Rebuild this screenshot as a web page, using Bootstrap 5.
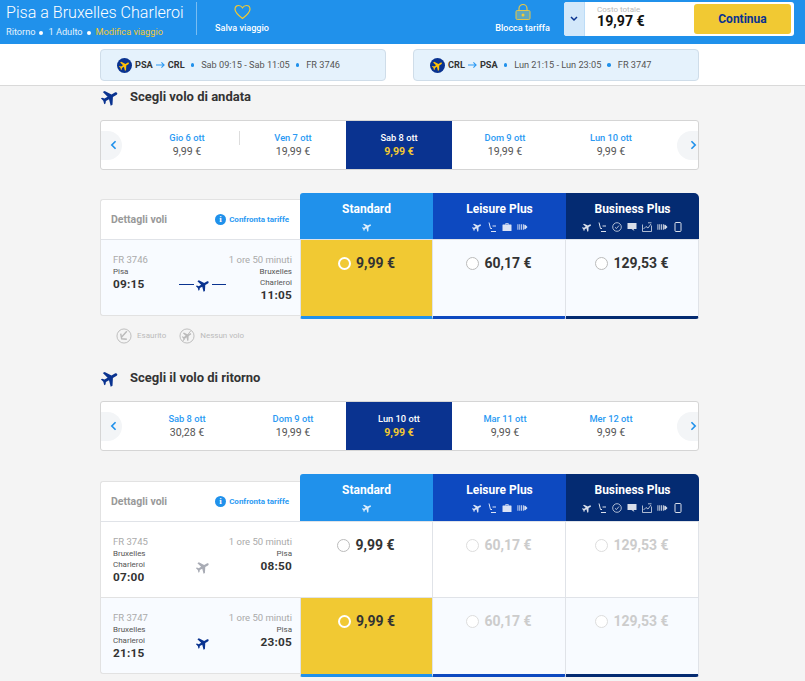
<!DOCTYPE html>
<html lang="it">
<head>
  <meta charset="UTF-8" />
  <meta name="viewport" content="width=device-width, initial-scale=1" />
  <title>Pisa a Bruxelles Charleroi</title>
  <link href="https://cdn.jsdelivr.net/npm/bootstrap@5.3.0/dist/css/bootstrap.min.css" rel="stylesheet" />
  <style>
    body { background: #f4f4f4; font-family: Roboto, "Liberation Sans", sans-serif; color: #333; overflow-x: hidden; }
    .top-bar { height: 44px; background: #2091eb; color: #fff; padding: 2px 11px 0 6px; }
    .trip-title { font-size: 16.1px; font-weight: 300; line-height: 20px; margin-top: 1px; white-space: nowrap; }
    .trip-meta { font-size: 9.2px; line-height: 11px; margin-top: 3px; color: #e3f1fc; white-space: nowrap; }
    .trip-meta i { display: inline-block; width: 4px; height: 4px; border-radius: 50%; background: #fff; margin: 0 5px 0 4px; vertical-align: 0; }
    .trip-meta span { color: #f1c933; }
    .trip-box { width: 190px; flex: none; }
    .top-divider { width: 1px; height: 33px; background: #79bdf2; flex: none; }
    .top-action { font-size: 9.1px; font-weight: 500; line-height: 11px; text-align: center; margin-top: 2px; white-space: nowrap; }
    .top-action svg { display: block; margin: 0 auto 3px; }
    .save-box { margin-left: 17px; width: 56px; }
    .lock-box { margin-right: 13px; width: 57px; }
    .total-box { width: 230px; height: 34px; background: #fff; border-radius: 3px; overflow: hidden; }
    .total-drop { width: 21px; background: #d3e8fa; border-right: 1px solid #bcdcf7; }
    .total-text { width: 109px; padding: 3px 0 0 12px; }
    .total-label { font-size: 8px; line-height: 9px; color: #bbb; }
    .total-value { font-size: 14.2px; font-weight: 700; line-height: 15px; color: #111; }
    .go-btn { width: 97px; height: 30px; margin: 2px 0 0 0; background: #f1c933; border: 0; border-radius: 3px; color: #0a3390; font-size: 12px; font-weight: 700; padding: 0; }
    .leg-bar { height: 42px; background: #fff; border-bottom: 1px solid #d9d9d9; padding: 5px 106px 0 100px; }
    .leg-pill { width: 286px; height: 32px; background: #e5f2fc; border: 1px solid #cfdde9; border-radius: 4px; padding-left: 16px; font-size: 9.2px; color: #555; white-space: nowrap; }
    .leg-pill b { color: #333; font-weight: 700; font-size: 9.2px; }
    .leg-pill .arr { margin: 0 3px; flex: none; }
    .leg-dot { width: 3.5px; height: 3.5px; border-radius: 50%; background: #2091eb; margin: 0 7px 0 6px; flex: none; }
    .leg-logo { width: 15px; height: 15px; border-radius: 50%; background: #0a3390; margin-right: 3px; flex: none; }
    .page-col { width: 599px; margin-left: 100px; }
    .step-title { height: 34px; }
    .step-title svg { margin: 2px 0 0 1px; flex: none; }
    .step-title h2 { font-size: 13px; font-weight: 700; line-height: 16px; margin: 3px 0 0 11px; color: #333; }
    .date-strip { height: 50px; background: #fff; border: 1px solid #d5d5d5; border-radius: 3px; overflow: hidden; }
    .strip-end { width: 33px; flex: none; }
    .strip-end.right { width: 34px; justify-content: flex-end; }
    .strip-btn { height: 29px; background: #f3f5f7; color: #2091eb; width: 21px; }
    .strip-end.left .strip-btn { border-radius: 0 15px 15px 0; padding-left: 3px; }
    .strip-end.right .strip-btn { border-radius: 15px 0 0 15px; padding-left: 11px; }
    .day-cell { width: 106px; flex: none; text-align: center; position: relative; padding-top: 11px; }
    .day-date { font-size: 9.3px; font-weight: 500; line-height: 12px; color: #2b9af3; }
    .day-price { font-size: 10.6px; line-height: 14px; margin-top: 1px; color: #555; }
    .day-cell.active { background: #0a3390; height: 48px; }
    .day-cell.active .day-date { color: #fff; }
    .day-cell.active .day-price { color: #f1c933; font-weight: 700; }
    .day-sep { position: absolute; right: 0; top: 10px; height: 14px; width: 1px; background: #ddd; }
    .fare-grid { display: grid; grid-template-columns: 200px repeat(3, 133px); margin-top: 23px; }
    .head-details { margin-top: 6px; height: 41px; background: #fff; border: 1px solid #e2e2e2; border-bottom: 1px solid #e0e3e8; border-right: 0; border-radius: 3px 0 0 0; padding: 0 11px 0 10px; }
    .head-details strong { font-size: 10.5px; font-weight: 700; color: #999; }
    .compare-link { font-size: 8px; font-weight: 700; color: #2b9af3; }
    .info-dot { width: 11px; height: 11px; border-radius: 50%; background: #2091eb; color: #fff; font: 700 9px/11px "Liberation Serif", serif; text-align: center; margin-right: 3px; }
    .fare-head { height: 47px; color: #fff; text-align: center; padding-top: 9px; border-bottom: 1px solid #e0e3e8; }
    .fare-head h3 { font-size: 12px; font-weight: 700; line-height: 14px; margin: 0 0 6px; }
    .fare-icons { gap: 5px; height: 10px; opacity: .85; }
    .tall-grid .fare-head { height: 48px; }
    .tall-grid .head-details { margin-top: 7px; }
    .tone-a { background: #2091eb; border-radius: 3px 0 0 0; }
    .tone-b { background: #0d49c0; }
    .tone-c { background: #042b72; border-radius: 0 5px 0 0; }
    .flight-cell { height: 76px; background: #fff; border: 1px solid #e2e2e2; border-top: 0; border-right: 0; padding: 14px 8px 0 12px; }
    .flight-cell.picked { background: #f8fbff; }
    .flight-cell.last { border-radius: 0 0 0 3px; height: 76px; }
    .flight-code { font-size: 9.5px; line-height: 12px; color: #aaa; white-space: nowrap; }
    .flight-city { font-size: 8px; line-height: 11px; color: #555; }
    .flight-time { font-size: 11.8px; font-weight: 700; line-height: 15px; color: #333; letter-spacing: .2px; }
    .flight-mid { flex: 1; min-width: 0; gap: 2px; }
    .flight-side { width: 66px; flex: none; }
    .flight-side.end { text-align: right; }
    .flight-line { width: 14.5px; height: 1px; background: #0a3390; flex: none; }
    .price-cell { height: 76px; background: #fff; border-right: 1px solid #e0e3e8; border-bottom: 1px solid #e0e3e8; padding-top: 15px; gap: 5px; }
    .price-cell.soft { background: #f8fbff; }
    .price-cell.sel { background: #f1c933; border-left: 1px solid #e0e3e8; border-bottom: 0; }
    .price-cell.barred { height: 79px; border-bottom: 3px solid; border-radius: 0 0 2px 0; }
    .bar-a { border-bottom-color: #2091eb !important; border-radius: 0 0 0 2px !important; }
    .bar-b { border-bottom-color: #0d49c0 !important; }
    .bar-c { border-bottom-color: #042b72 !important; border-radius: 0 0 3px 0 !important; }
    .radio-dot { width: 13px; height: 13px; border-radius: 50%; border: 1px solid #bbb; background: #fff; margin-top: 2px; }
    .price-cell.sel .radio-dot { background: #f1c933; border: 2px solid #fff; }
    .fare-price { font-size: 14px; font-weight: 700; line-height: 17px; color: #333; }
    .off .fare-price { color: #ccc; }
    .off .radio-dot { border-color: #ddd; }
    .legend-row { height: 38px; padding: 8px 0 13px 16px; font-size: 8px; color: #bbb; gap: 5px; }
    .second-title { margin-top: 10px; }
  </style>
</head>
<body>
  <svg width="0" height="0" class="d-block position-absolute">
    <symbol id="plane" viewBox="0 0 24 24"><path fill="currentColor" transform="rotate(60 12 12)" d="M22.500 17v-2.800l-8.600-5.600V3.400C13.900 2.300 13 1 12 1s-1.900 1.300-1.900 2.400v5.200L1.500 14.200V17l8.600-2.400v4.800L7.500 21.500v2L12 22.300l4.500 1.200v-2l-2.600-2.100v-4.800z"/></symbol>
    <symbol id="seat" viewBox="0 0 10 10"><path fill="none" stroke="currentColor" d="M2 0.500 3.500 6.500H5M5.500 4H9M4 9.500H9"/></symbol>
    <symbol id="bag" viewBox="0 0 10 10"><path fill="currentColor" d="M3.500 1h3v1.500H9a.5.5 0 0 1 .5.5v6h-9V3a.5.5 0 0 1 .5-.5h2.500zm.7.7v.8h1.600v-.8z"/></symbol>
    <symbol id="queue" viewBox="0 0 12 10"><path fill="none" stroke="currentColor" d="M1 2v6M3 2v6M5 2v6M7 2v6"/><path fill="currentColor" d="M8 2.500h1L11.500 5 9 7.500H8z"/></symbol>
    <symbol id="clock" viewBox="0 0 10 10"><circle cx="5" cy="5" r="4.300" fill="none" stroke="currentColor" stroke-width=".8"/><path fill="none" stroke="currentColor" stroke-width=".8" d="M3 5.300 4.500 6.500 7 3.500"/></symbol>
    <symbol id="lounge" viewBox="0 0 10 10"><path fill="currentColor" d="M.5 1h9v6h-3l1 2-3-2h-4z"/></symbol>
    <symbol id="chart" viewBox="0 0 10 10"><path fill="none" stroke="currentColor" stroke-width=".8" d="M.5 2.500v7h9v-6M1.500 7l2.500-2.500 2 1.500 3-4M6 .8h3.500"/></symbol>
    <symbol id="phone" viewBox="0 0 10 10"><rect x="2" y=".5" width="6" height="9" rx="1" fill="none" stroke="currentColor"/></symbol>
    <symbol id="chev-l" viewBox="0 0 8 12"><path fill="none" stroke="currentColor" stroke-width="2" d="M6.500 1.500 2 6l4.500 4.500"/></symbol>
    <symbol id="chev-r" viewBox="0 0 8 12"><path fill="none" stroke="currentColor" stroke-width="2" d="M1.500 1.500 6 6l-4.500 4.500"/></symbol>
    <symbol id="go-arrow" viewBox="0 0 10 8"><path fill="none" stroke="#2b9af3" stroke-width="1.200" d="M0 4h9M6 1l3 3-3 3"/></symbol>
  </svg>

  <header class="top-bar d-flex align-items-start">
    <div class="trip-box">
      <div class="trip-title">Pisa a Bruxelles Charleroi</div>
      <div class="trip-meta">Ritorno<i></i>1 Adulto<i></i><span>Modifica viaggio</span></div>
    </div>
    <div class="top-divider"></div>
    <div class="top-action save-box">
      <svg width="17" height="16" viewBox="0 0 17 16"><path fill="none" stroke="#f1c933" stroke-width="1.200" d="M8.500 14.500C4 11 1 8.500 1 5.200 1 3 2.700 1.500 4.600 1.500c1.700 0 3 .9 3.900 2.300.9-1.400 2.200-2.300 3.900-2.300C14.300 1.500 16 3 16 5.200c0 3.300-3 5.800-7.500 9.300z"/></svg>
      Salva viaggio
    </div>
    <div class="ms-auto top-action lock-box">
      <svg width="16" height="16" viewBox="0 0 16 16"><path fill="none" stroke="#e3c64a" stroke-width="1.200" d="M4 7V4.500a4 4 0 0 1 8 0V7"/><rect x="1" y="6.500" width="14" height="9" rx="1.200" fill="#5fa8c0" stroke="#e3c64a" stroke-width="1"/><circle cx="8" cy="11" r="1.500" fill="#f1c933"/></svg>
      Blocca tariffa
    </div>
    <div class="total-box d-flex">
      <div class="total-drop d-flex align-items-center justify-content-center">
        <svg width="8" height="6" viewBox="0 0 8 6"><path fill="none" stroke="#0a3390" stroke-width="1.500" d="M1 1l3 3 3-3"/></svg>
      </div>
      <div class="total-text">
        <div class="total-label">Costo totale</div>
        <div class="total-value">19,97 €</div>
      </div>
      <button type="button" class="go-btn">Continua</button>
    </div>
  </header>

  <div class="leg-bar d-flex justify-content-between">
    <div class="leg-pill d-flex align-items-center">
      <span class="leg-logo d-flex align-items-center justify-content-center text-warning"><svg width="11" height="11"><use href="#plane" /></svg></span>
      <b>PSA</b><svg class="arr" width="9" height="8"><use href="#go-arrow" /></svg><b>CRL</b><span class="leg-dot"></span>Sab 09:15 - Sab 11:05<span class="leg-dot"></span>FR 3746
    </div>
    <div class="leg-pill d-flex align-items-center">
      <span class="leg-logo d-flex align-items-center justify-content-center text-warning"><svg width="11" height="11"><use href="#plane" /></svg></span>
      <b>CRL</b><svg class="arr" width="9" height="8"><use href="#go-arrow" /></svg><b>PSA</b><span class="leg-dot"></span>Lun 21:15 - Lun 23:05<span class="leg-dot"></span>FR 3747
    </div>
  </div>

  <main class="page-col">
    <div class="step-title d-flex">
      <svg width="18" height="18" style="color:#0a3390"><use href="#plane" /></svg>
      <h2>Scegli volo di andata</h2>
    </div>
    <div class="date-strip d-flex">
      <div class="strip-end left d-flex align-items-center"><span class="strip-btn d-flex align-items-center justify-content-center"><svg width="7" height="10"><use href="#chev-l" /></svg></span></div>
      <div class="day-cell"><div class="day-date">Gio 6 ott</div><div class="day-price">9,99 €</div><span class="day-sep"></span></div>
      <div class="day-cell"><div class="day-date">Ven 7 ott</div><div class="day-price">19,99 €</div></div>
      <div class="day-cell active"><div class="day-date">Sab 8 ott</div><div class="day-price">9,99 €</div></div>
      <div class="day-cell"><div class="day-date">Dom 9 ott</div><div class="day-price">19,99 €</div></div>
      <div class="day-cell"><div class="day-date">Lun 10 ott</div><div class="day-price">9,99 €</div></div>
      <div class="strip-end right d-flex align-items-center"><span class="strip-btn d-flex align-items-center justify-content-center"><svg width="7" height="10"><use href="#chev-r" /></svg></span></div>
    </div>

    <div class="fare-grid">
      <div class="head-details d-flex align-items-center justify-content-between">
        <strong>Dettagli voli</strong>
        <span class="compare-link d-flex align-items-center"><span class="info-dot">i</span>Confronta tariffe</span>
      </div>
      <div class="fare-head tone-a">
        <h3>Standard</h3>
        <div class="fare-icons d-flex justify-content-center"><svg width="10" height="10"><use href="#plane" /></svg></div>
      </div>
      <div class="fare-head tone-b">
        <h3>Leisure Plus</h3>
        <div class="fare-icons d-flex justify-content-center"><svg width="10" height="10"><use href="#plane" /></svg><svg width="10" height="10"><use href="#seat" /></svg><svg width="10" height="10"><use href="#bag" /></svg><svg width="11" height="10"><use href="#queue" /></svg></div>
      </div>
      <div class="fare-head tone-c">
        <h3>Business Plus</h3>
        <div class="fare-icons d-flex justify-content-center"><svg width="10" height="10"><use href="#plane" /></svg><svg width="10" height="10"><use href="#seat" /></svg><svg width="10" height="10"><use href="#clock" /></svg><svg width="10" height="10"><use href="#lounge" /></svg><svg width="10" height="10"><use href="#chart" /></svg><svg width="11" height="10"><use href="#queue" /></svg><svg width="10" height="10"><use href="#phone" /></svg></div>
      </div>

      <div class="flight-cell picked last d-flex">
        <div class="flight-side">
          <div class="flight-code">FR 3746</div>
          <div class="flight-city">Pisa</div>
          <div class="flight-time">09:15</div>
        </div>
        <div class="flight-mid d-flex align-items-center justify-content-center">
          <span class="flight-line"></span><svg width="14" height="14" style="color:#0a3390"><use href="#plane" /></svg><span class="flight-line"></span>
        </div>
        <div class="flight-side end">
          <div class="flight-code">1 ore 50 minuti</div>
          <div class="flight-city">Bruxelles<br />Charleroi</div>
          <div class="flight-time">11:05</div>
        </div>
      </div>
      <div class="price-cell sel barred bar-a d-flex justify-content-center align-items-start"><span class="radio-dot"></span><span class="fare-price">9,99 €</span></div>
      <div class="price-cell soft barred bar-b d-flex justify-content-center align-items-start"><span class="radio-dot"></span><span class="fare-price">60,17 €</span></div>
      <div class="price-cell soft barred bar-c d-flex justify-content-center align-items-start"><span class="radio-dot"></span><span class="fare-price">129,53 €</span></div>
    </div>

    <div class="legend-row d-flex align-items-center">
      <svg width="16" height="16" viewBox="0 0 17 17"><circle cx="8.500" cy="8.500" r="7.500" fill="none" stroke="#bbb"/><path fill="none" stroke="#bbb" stroke-width="1.500" d="M11.500 3.500 6 9.500M5 6l1 5.500 5.500 .5"/></svg>
      <span>Esaurito</span>
      <svg class="ms-2" width="16" height="16" viewBox="0 0 17 17" style="color:#bbb"><circle cx="8.500" cy="8.500" r="7.500" fill="none" stroke="#bbb"/><use href="#plane" x="3" y="3" width="11" height="11"/><path stroke="#bbb" d="M12.500 3 4 14"/></svg>
      <span>Nessun volo</span>
    </div>

    <div class="step-title second-title d-flex">
      <svg width="18" height="18" style="color:#0a3390"><use href="#plane" /></svg>
      <h2>Scegli il volo di ritorno</h2>
    </div>
    <div class="date-strip d-flex">
      <div class="strip-end left d-flex align-items-center"><span class="strip-btn d-flex align-items-center justify-content-center"><svg width="7" height="10"><use href="#chev-l" /></svg></span></div>
      <div class="day-cell"><div class="day-date">Sab 8 ott</div><div class="day-price">30,28 €</div></div>
      <div class="day-cell"><div class="day-date">Dom 9 ott</div><div class="day-price">19,99 €</div></div>
      <div class="day-cell active"><div class="day-date">Lun 10 ott</div><div class="day-price">9,99 €</div></div>
      <div class="day-cell"><div class="day-date">Mar 11 ott</div><div class="day-price">9,99 €</div></div>
      <div class="day-cell"><div class="day-date">Mer 12 ott</div><div class="day-price">9,99 €</div></div>
      <div class="strip-end right d-flex align-items-center"><span class="strip-btn d-flex align-items-center justify-content-center"><svg width="7" height="10"><use href="#chev-r" /></svg></span></div>
    </div>

    <div class="fare-grid tall-grid">
      <div class="head-details d-flex align-items-center justify-content-between">
        <strong>Dettagli voli</strong>
        <span class="compare-link d-flex align-items-center"><span class="info-dot">i</span>Confronta tariffe</span>
      </div>
      <div class="fare-head tone-a">
        <h3>Standard</h3>
        <div class="fare-icons d-flex justify-content-center"><svg width="10" height="10"><use href="#plane" /></svg></div>
      </div>
      <div class="fare-head tone-b">
        <h3>Leisure Plus</h3>
        <div class="fare-icons d-flex justify-content-center"><svg width="10" height="10"><use href="#plane" /></svg><svg width="10" height="10"><use href="#seat" /></svg><svg width="10" height="10"><use href="#bag" /></svg><svg width="11" height="10"><use href="#queue" /></svg></div>
      </div>
      <div class="fare-head tone-c">
        <h3>Business Plus</h3>
        <div class="fare-icons d-flex justify-content-center"><svg width="10" height="10"><use href="#plane" /></svg><svg width="10" height="10"><use href="#seat" /></svg><svg width="10" height="10"><use href="#clock" /></svg><svg width="10" height="10"><use href="#lounge" /></svg><svg width="10" height="10"><use href="#chart" /></svg><svg width="11" height="10"><use href="#queue" /></svg><svg width="10" height="10"><use href="#phone" /></svg></div>
      </div>

      <div class="flight-cell d-flex">
        <div class="flight-side">
          <div class="flight-code">FR 3745</div>
          <div class="flight-city">Bruxelles<br />Charleroi</div>
          <div class="flight-time">07:00</div>
        </div>
        <div class="flight-mid d-flex align-items-center justify-content-center">
          <svg width="14" height="14" style="color:#a9acb5"><use href="#plane" /></svg>
        </div>
        <div class="flight-side end">
          <div class="flight-code">1 ore 50 minuti</div>
          <div class="flight-city">Pisa</div>
          <div class="flight-time">08:50</div>
        </div>
      </div>
      <div class="price-cell d-flex justify-content-center align-items-start"><span class="radio-dot"></span><span class="fare-price">9,99 €</span></div>
      <div class="price-cell off d-flex justify-content-center align-items-start"><span class="radio-dot"></span><span class="fare-price">60,17 €</span></div>
      <div class="price-cell off d-flex justify-content-center align-items-start"><span class="radio-dot"></span><span class="fare-price">129,53 €</span></div>

      <div class="flight-cell picked last d-flex">
        <div class="flight-side">
          <div class="flight-code">FR 3747</div>
          <div class="flight-city">Bruxelles<br />Charleroi</div>
          <div class="flight-time">21:15</div>
        </div>
        <div class="flight-mid d-flex align-items-center justify-content-center">
          <svg width="14" height="14" style="color:#0a3390"><use href="#plane" /></svg>
        </div>
        <div class="flight-side end">
          <div class="flight-code">1 ore 50 minuti</div>
          <div class="flight-city">Pisa</div>
          <div class="flight-time">23:05</div>
        </div>
      </div>
      <div class="price-cell sel barred bar-a d-flex justify-content-center align-items-start"><span class="radio-dot"></span><span class="fare-price">9,99 €</span></div>
      <div class="price-cell soft off barred bar-b d-flex justify-content-center align-items-start"><span class="radio-dot"></span><span class="fare-price">60,17 €</span></div>
      <div class="price-cell soft off barred bar-c d-flex justify-content-center align-items-start"><span class="radio-dot"></span><span class="fare-price">129,53 €</span></div>
    </div>
  </main>

  <script src="https://cdn.jsdelivr.net/npm/bootstrap@5.3.0/dist/js/bootstrap.bundle.min.js"></script>
</body>
</html>
